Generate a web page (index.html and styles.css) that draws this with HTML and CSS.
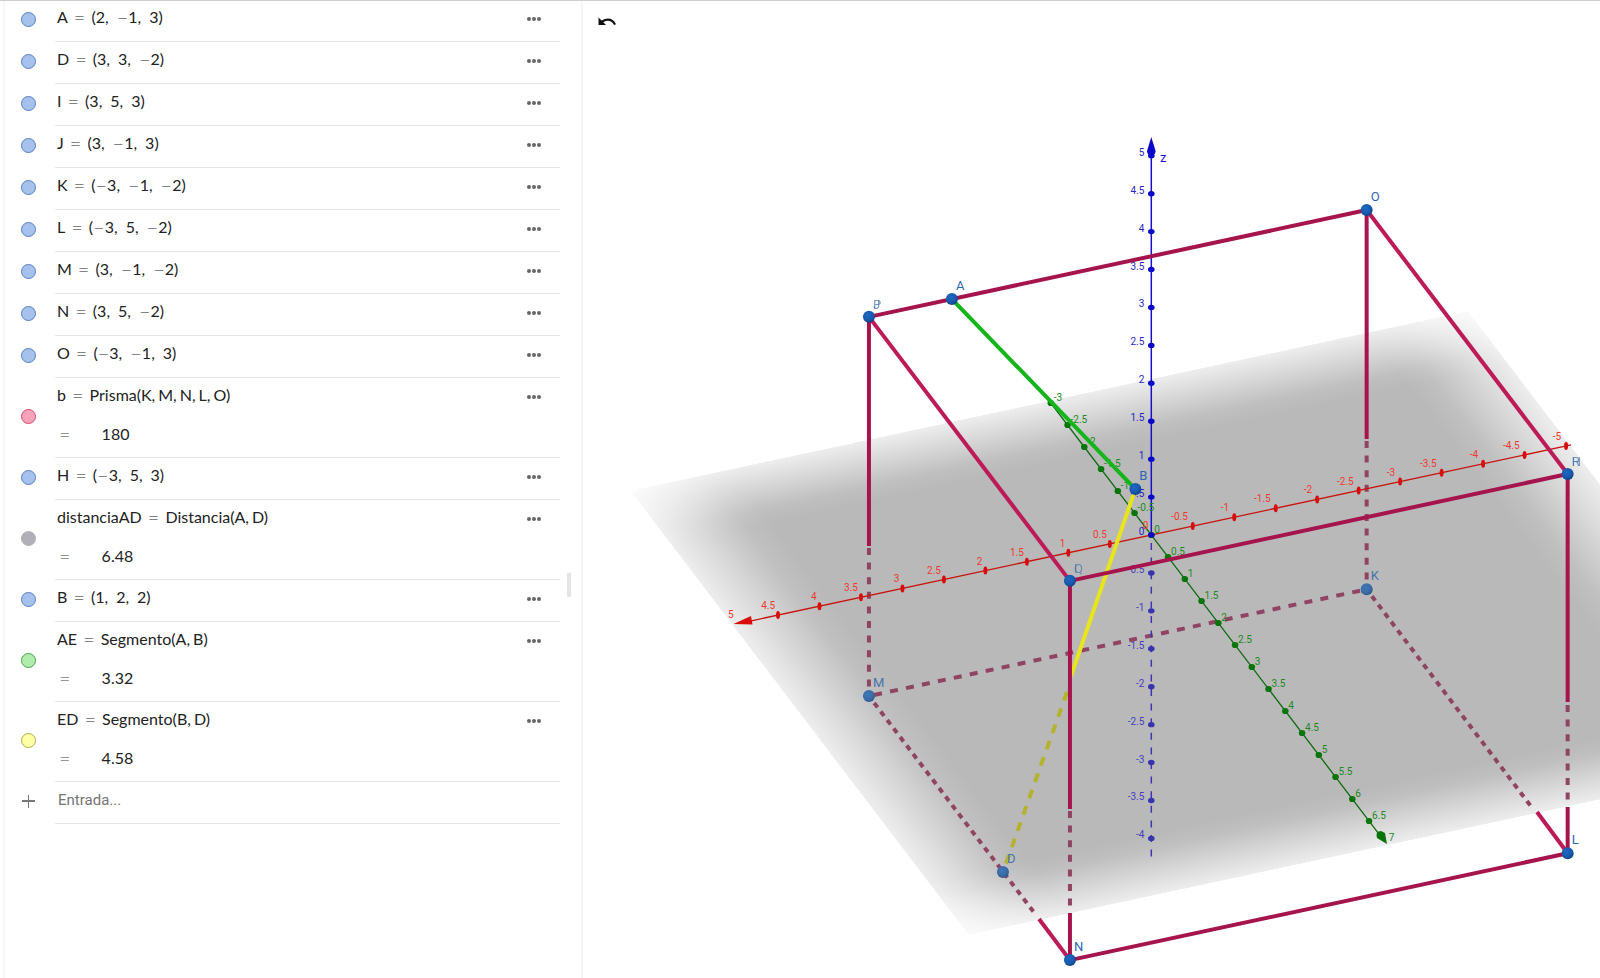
FILE: index.html
```html
<!DOCTYPE html>
<html lang="es">
<head>
<meta charset="utf-8">
<title>Calculadora 3D</title>
<link rel="stylesheet" href="styles.css">
</head>
<body>
<main class="app">
  <section class="algebra" aria-label="Vista algebraica">
    <ul class="rows" id="rows"></ul>
    <form class="entry">
      <span class="plus" aria-hidden="true"></span>
      <input class="entry-input" type="text" placeholder="Entrada..." aria-label="Entrada">
    </form>
    <span class="scroll-thumb"></span>
  </section>
  <section class="view" aria-label="Vista gráfica 3D">
    <svg class="scene" id="scene" viewBox="583 1 1017 977" preserveAspectRatio="xMinYMin slice" role="img" aria-label="Prisma en tres dimensiones">
      <defs>
        <linearGradient id="fadeX">
          <stop offset="0" stop-color="#b9b9b9" stop-opacity="0.25"/>
          <stop offset="0.09" stop-color="#b9b9b9" stop-opacity="0.9"/>
          <stop offset="0.12" stop-color="#b9b9b9"/>
          <stop offset="0.88" stop-color="#b9b9b9"/>
          <stop offset="0.91" stop-color="#b9b9b9" stop-opacity="0.9"/>
          <stop offset="1" stop-color="#b9b9b9" stop-opacity="0.25"/>
        </linearGradient>
        <linearGradient id="fadeY" x1="0" y1="0" x2="0" y2="1">
          <stop offset="0" stop-color="#fff" stop-opacity="0.25"/>
          <stop offset="0.09" stop-color="#fff" stop-opacity="0.9"/>
          <stop offset="0.12" stop-color="#fff"/>
          <stop offset="0.88" stop-color="#fff"/>
          <stop offset="0.91" stop-color="#fff" stop-opacity="0.9"/>
          <stop offset="1" stop-color="#fff" stop-opacity="0.25"/>
        </linearGradient>
        <mask id="planeMask" maskUnits="userSpaceOnUse" x="-5.05" y="-3.05" width="10.1" height="10.1">
          <rect x="-5.05" y="-3.05" width="10.1" height="10.1" fill="url(#fadeY)"/>
        </mask>
        <radialGradient id="ball" cx="0.4" cy="0.35" r="0.7">
          <stop offset="0" stop-color="#1f68c4"/>
          <stop offset="0.6" stop-color="#1759ad"/>
          <stop offset="1" stop-color="#0e3f80"/>
        </radialGradient>
        <radialGradient id="ballHidden" cx="0.4" cy="0.35" r="0.7">
          <stop offset="0" stop-color="#4077b8"/>
          <stop offset="0.6" stop-color="#3a6ca6"/>
          <stop offset="1" stop-color="#2b5484"/>
        </radialGradient>
      </defs>
    </svg>
    <button class="undo" type="button" aria-label="Deshacer">
      <svg viewBox="0 0 20 12" width="20" height="12" aria-hidden="true">
        <path d="M0.500 1.500V9H8L5.300 6.300C9.200 3.600 13.800 4.600 16 9L18 8.200C15.600 2 8.800 1 3.600 4.600Z" fill="#111"/>
      </svg>
    </button>
  </section>
</main>
<script src="scene.js"></script>
</body>
</html>
```
FILE: styles.css
```css
* { box-sizing: border-box; }

body {
  margin: 0;
  background: #fff;
  font-family: Roboto, "Liberation Sans", sans-serif;
}

.app {
  display: flex;
  height: 100vh;
  border-top: 1px solid #cfcccf;
  overflow: hidden;
}

.algebra {
  position: relative;
  flex: 0 0 580px;
  margin-left: 3px;
  padding: 0 21px 0 16px;
  border-left: 2px solid #f8f8f8;
  border-right: 2px solid #f6f6f6;
  overflow: hidden;
}

.rows {
  margin: -1px 0 0;
  padding: 0;
  list-style: none;
}

.row {
  display: flex;
  align-items: center;
  gap: 19px;
}

.marble {
  flex: none;
  width: 15px;
  height: 15px;
  margin-bottom: 4px;
  padding: 0;
  border: 1px solid;
  border-radius: 50%;
}

.marble-blue { background: #a5c1ec; border-color: #5581c4; }
.marble-pink { background: #f7a3b9; border-color: #d8476f; }
.marble-gray { background: #b1b0b8; border-color: #b1b0b8; }
.marble-green { background: #b0ecab; border-color: #4ba148; }
.marble-yellow { background: #ffffa8; border-color: #aeac4c; }

.cell {
  display: flex;
  flex: 1;
  justify-content: space-between;
  min-height: 42px;
  border-bottom: 1px solid #e6e6e6;
}

.cell-tall { min-height: 80px; }

.math {
  padding: 6px 0 0 2px;
  color: #222;
  font-family: Lato, "Noto Sans", sans-serif;
  font-size: 16px;
  line-height: 22px;
  white-space: nowrap;
}

.op {
  font-size: 20px;
  font-weight: 300;
  line-height: 16px;
  vertical-align: -2px;
}

.eq { margin: 0 6px; }
.comma { margin-right: 8px; }
.comma-thin { margin-right: 3px; }

.result {
  display: flex;
  align-items: center;
  gap: 31px;
  margin-top: 17px;
}

.result-eq { padding-left: 2px; color: #444; }

.more {
  align-self: flex-start;
  display: flex;
  gap: 1px;
  margin: 13px 17px 0 0;
  padding: 4px 2px;
  border: 0;
  background: none;
}

.more-dot {
  width: 4px;
  height: 4px;
  border-radius: 50%;
  background: #666;
}

.entry {
  display: flex;
  align-items: center;
  gap: 19px;
}

.plus {
  flex: none;
  width: 15px;
  height: 13px;
  margin-bottom: 4px;
  background:
    linear-gradient(#777, #777) center / 13px 2px no-repeat,
    linear-gradient(#777, #777) center / 1px 13px no-repeat;
}

.entry-input {
  flex: 1;
  min-width: 0;
  height: 42px;
  padding: 0 3px 5px;
  border: 0;
  border-bottom: 1px solid #e6e6e6;
  outline: 0;
  font-family: Roboto, sans-serif;
  font-size: 15px;
}

.entry-input::placeholder { color: #757575; opacity: 1; }

.scroll-thumb {
  position: absolute;
  top: 572px;
  right: 10px;
  width: 4px;
  height: 24px;
  background: #e4e4e4;
}

.view {
  position: relative;
  flex: 1;
  min-width: 0;
}

.scene {
  display: block;
  width: 100%;
  height: 100%;
}

.undo {
  position: absolute;
  top: 15px;
  left: 15px;
  padding: 0;
  border: 0;
  background: none;
  line-height: 0;
}

.edge { stroke: #a6144d; stroke-width: 4; }
.edge-light { stroke: #bd1b58; stroke-width: 4; }
.edge-hidden { stroke: #8f4562; stroke-width: 4; }
.green-seg { stroke: #14b51a; stroke-width: 4; stroke-linecap: round; }
.yellow-seg { stroke: #e8e41e; stroke-width: 4; }
.yellow-hidden { stroke: #b3b32e; stroke-width: 4; }

.axis-x { stroke: #c8140f; fill: #d90b0b; }
.axis-y { stroke: #0d6b10; fill: #077507; }
.axis-z { stroke: #1a10cc; fill: #0b06cc; }
.axis-z-low { stroke: #3c35b4; fill: #3a33b0; }
.mark { stroke: none; }

.num { font-size: 10px; }
.num-x { fill: #ef3a30; text-anchor: end; }
.num-y { fill: #208a22; }
.num-z { fill: #271fc6; text-anchor: end; }
.num-low { fill: #4640bb; }
.name { font-size: 13px; fill: #2c66b4; }
.name-hidden { fill: #4674ab; }
.name-shared { opacity: 0.7; }
.name-z { font-size: 13px; fill: #1d14cc; }
```
FILE: scene.js
```js
const MINUS = '<span class="op">\u2212</span>';

const objects = [
  ['blue', 'A', [2, -1, 3]],
  ['blue', 'D', [3, 3, -2]],
  ['blue', 'I', [3, 5, 3]],
  ['blue', 'J', [3, -1, 3]],
  ['blue', 'K', [-3, -1, -2]],
  ['blue', 'L', [-3, 5, -2]],
  ['blue', 'M', [3, -1, -2]],
  ['blue', 'N', [3, 5, -2]],
  ['blue', 'O', [-3, -1, 3]],
  ['pink', 'b', 'Prisma', 'KMNLO', '180'],
  ['blue', 'H', [-3, 5, 3]],
  ['gray', 'distanciaAD', 'Distancia', 'AD', '6.48'],
  ['blue', 'B', [1, 2, 2]],
  ['green', 'AE', 'Segmento', 'AB', '3.32'],
  ['yellow', 'ED', 'Segmento', 'BD', '4.58']
];

document.getElementById('rows').innerHTML = objects.map(([color, name, def, args, value]) => {
  const eq = '<span class="op eq">=</span>';
  const body = value
    ? `${def}(${[...args].join('<span class="comma-thin">,</span>')})`
    : `(${def.map(n => String(n).replace('-', MINUS)).join('<span class="comma">,</span>')})`;
  const result = value
    ? `<div class="result"><span class="op result-eq">=</span><span>${value}</span></div>`
    : '';
  return `<li class="row">
    <button class="marble marble-${color}" type="button" aria-label="Mostrar ${name}"></button>
    <div class="cell${value ? ' cell-tall' : ''}">
      <div class="math"><div>${name}${eq}${body}</div>${result}</div>
      <button class="more" type="button" aria-label="Opciones de ${name}"><span class="more-dot"></span><span class="more-dot"></span><span class="more-dot"></span></button>
    </div>
  </li>`;
}).join('');

const origin = [1151.3, 535];
const project = (x, y, z) => [
  origin[0] - 82.95 * x + 33.5 * y,
  origin[1] + 17.8 * x + 44 * y - 75.85 * z
];

const line = (a, b, cls, dash, offset = 0) =>
  `<line x1="${a[0]}" y1="${a[1]}" x2="${b[0]}" y2="${b[1]}" class="${cls}"` +
  (dash ? ` stroke-dasharray="${dash}" stroke-dashoffset="${offset}"` : '') + '/>';
const mark = (p, rx, ry, cls) =>
  `<ellipse cx="${p[0]}" cy="${p[1]}" rx="${rx}" ry="${ry}" class="${cls} mark"/>`;
const text = (x, y, s, cls) => `<text x="${x}" y="${y}" class="${cls}">${s}</text>`;

const P = {
  A: project(2, -1, 3), B: project(1, 2, 2), D: project(3, 3, -2),
  J: project(3, -1, 3), K: project(-3, -1, -2), L: project(-3, 5, -2),
  M: project(3, -1, -2), N: project(3, 5, -2), O: project(-3, -1, 3),
  Q: project(3, 5, 3), R: project(-3, 5, 3)
};

const out = [];

out.push(`<g transform="matrix(-82.95 17.8 33.5 44 ${origin[0]} ${origin[1]})">
  <rect x="-5.05" y="-3.05" width="10.1" height="10.1" fill="url(#fadeX)" mask="url(#planeMask)"/></g>`);

// hidden edges
const atY = (p, y) => [p[0], y];
out.push(line(P.M, P.K, 'edge-hidden', '8 8.3', 11));
out.push(line(atY(P.J, 548), P.M, 'edge-hidden', '7 7.6'));
out.push(line(atY(P.O, 441), P.K, 'edge-hidden', '7 7.6'));
out.push(line(P.M, [1036, 915], 'edge-hidden', '5.500 5.200', 2));
out.push(line(P.K, [1533, 809], 'edge-hidden', '5.500 5.200', 2));
out.push(line(atY(P.R, 705), atY(P.R, 800), 'edge-hidden', '7 7.6'));
out.push(line([1067, 692], P.D, 'yellow-hidden', '9 8.3', 0));

// axes
out.push('<g stroke-width="1.300">');
out.push(line(project(4.85, 0, 0), project(-5.06, 0, 0), 'axis-x'));
out.push(line(project(0, -3, 0), project(0, 6.9, 0), 'axis-y'));
out.push('</g>');
out.push('<path d="M733.500 624L751 616L752.500 624.500Z" class="axis-x mark"/>');
out.push('<path d="M1387 844L1377 838Q1375 831 1381 831L1385 833Z" class="axis-y mark"/>');
out.push(`<g stroke-width="1.500">${line(atY(origin, 150), origin, 'axis-z')}${line(atY(origin, 543), atY(origin, 858), 'axis-z-low', '7 7.6')}</g>`);
out.push('<path d="M1151.300 137L1147 151Q1147 155 1151.300 155Q1155.600 155 1155.600 151Z" class="axis-z mark"/>');

for (let v = -5; v <= 5; v += 0.5) {
  const p = project(v, 0, 0);
  if (v < 5 && v !== 0) out.push(mark(p, 2, 4, 'axis-x'));
  out.push(text(p[0] - (v < 0 ? 5 : 3), p[1] - 6, v, 'num num-x'));
}
for (let v = -3; v <= 7; v += 0.5) {
  const p = project(0, v, 0);
  if (v < 7) out.push(mark(p, 3.3, 3.1, 'axis-y'));
  out.push(text(p[0] + 3, p[1] - 2, v, 'num num-y'));
}
for (let v = -4; v <= 5; v += 0.5) {
  const p = project(0, 0, v);
  const low = v < 0;
  out.push(mark(p, 3.3, 2.7, low ? 'axis-z-low' : 'axis-z'));
  out.push(text(p[0] - 7, p[1], v, 'num num-z' + (low ? ' num-low' : '')));
}
out.push(text(1160, 162, 'z', 'name-z'));

// segments
out.push(line(P.A, P.B, 'green-seg'));
out.push(line(P.B, [1071, 676], 'yellow-seg'));

// visible edges
out.push(line(P.J, P.O, 'edge'));
out.push(line(P.J, atY(P.J, 546), 'edge'));
out.push(line(P.O, atY(P.O, 439), 'edge'));
out.push(line(P.O, P.R, 'edge-light'));
out.push(line(P.J, P.Q, 'edge-light'));
out.push(line(P.R, atY(P.R, 702), 'edge'));
out.push(line(atY(P.R, 807), P.L, 'edge'));
out.push(line(atY(P.Q, 811), atY(P.Q, 907), 'edge-hidden', '7 7.6'));
out.push(line(P.Q, atY(P.Q, 809), 'edge'));
out.push(line(atY(P.Q, 913), P.N, 'edge'));
out.push(line(P.Q, P.R, 'edge'));
out.push(line([1039, 919], P.N, 'edge-light'));
out.push(line([1537, 812], P.L, 'edge-light'));
out.push(line(P.N, P.L, 'edge'));

for (const [key, p] of Object.entries(P)) {
  const hidden = 'DKM'.includes(key);
  out.push(`<circle cx="${p[0]}" cy="${p[1]}" r="6" fill="url(#${hidden ? 'ballHidden' : 'ball'})"/>`);
  if (!'JQR'.includes(key)) out.push(text(p[0] + 4, p[1] - 9, key, 'name' + (hidden ? ' name-hidden' : '')));
}

// coincident points share one label position
for (const [p, names] of [[P.J, 'JP'], [P.Q, 'IQ'], [P.R, 'HR']]) {
  for (const n of names) out.push(text(p[0] + 4, p[1] - 8, n, 'name name-hidden name-shared'));
}

document.getElementById('scene').insertAdjacentHTML('beforeend', out.join(''));
```
